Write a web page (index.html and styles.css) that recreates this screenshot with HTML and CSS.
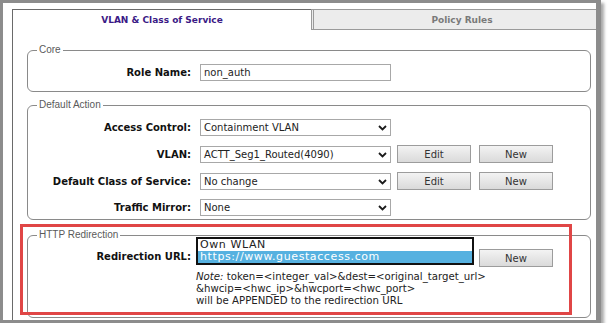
FILE: index.html
```html
<!DOCTYPE html>
<html lang="en">
<head>
    <meta charset="UTF-8">
    <meta name="viewport" content="width=device-width, initial-scale=1.0">
    <title>Role - VLAN &amp; Class of Service</title>
    <link rel="stylesheet" href="styles.css">
</head>
<body>
    <div class="frame">
        <!-- Tabs -->
        <div class="tabs">
            <div class="tab active">VLAN &amp; Class of Service</div>
            <div class="tab inactive">Policy Rules</div>
        </div>

        <div class="panel">
            <!-- Core -->
            <fieldset class="group core">
                <legend>Core</legend>
                <div class="row">
                    <label>Role Name:</label>
                    <div class="field">non_auth</div>
                </div>
            </fieldset>

            <!-- Default Action -->
            <fieldset class="group action">
                <legend>Default Action</legend>
                <div class="rows">
                    <div class="row">
                        <label>Access Control:</label>
                        <div class="field select">Containment VLAN
                            <svg class="chev" width="9" height="6" viewBox="0 0 9 6"><path d="M1 1 L4.5 4.5 L8 1" fill="none" stroke="#1a1a1a" stroke-width="1.8"/></svg>
                        </div>
                    </div>
                    <div class="row">
                        <label>VLAN:</label>
                        <div class="field select">ACTT_Seg1_Routed(4090)
                            <svg class="chev" width="9" height="6" viewBox="0 0 9 6"><path d="M1 1 L4.5 4.5 L8 1" fill="none" stroke="#1a1a1a" stroke-width="1.8"/></svg>
                        </div>
                        <button class="btn">Edit</button>
                        <button class="btn new">New</button>
                    </div>
                    <div class="row">
                        <label>Default Class of Service:</label>
                        <div class="field select">No change
                            <svg class="chev" width="9" height="6" viewBox="0 0 9 6"><path d="M1 1 L4.5 4.5 L8 1" fill="none" stroke="#1a1a1a" stroke-width="1.8"/></svg>
                        </div>
                        <button class="btn">Edit</button>
                        <button class="btn new">New</button>
                    </div>
                    <div class="row">
                        <label>Traffic Mirror:</label>
                        <div class="field select">None
                            <svg class="chev" width="9" height="6" viewBox="0 0 9 6"><path d="M1 1 L4.5 4.5 L8 1" fill="none" stroke="#1a1a1a" stroke-width="1.8"/></svg>
                        </div>
                    </div>
                </div>
            </fieldset>

            <!-- HTTP Redirection -->
            <fieldset class="group redirect">
                <legend>HTTP Redirection</legend>
                <div class="row top">
                    <label class="low">Redirection URL:</label>
                    <div class="listbox">
                        <div class="option">Own WLAN</div>
                        <div class="option selected">https://www.guestaccess.com</div>
                    </div>
                    <button class="btn list-new">New</button>
                </div>
                <div class="note">
                    <em>Note:</em> token=&lt;integer_val&gt;&amp;dest=&lt;original_target_url&gt;<br>
                    &amp;hwcip=&lt;hwc_ip&gt;&amp;hwcport=&lt;hwc_port&gt;<br>
                    will be APPENDED to the redirection URL
                </div>
            </fieldset>
        </div>

        <!-- Marca roja sobre la sección -->
        <div class="highlight"></div>
    </div>
</body>
</html>
```

FILE: styles.css
```css
* {
    margin: 0;
    padding: 0;
    box-sizing: border-box;
}

body {
    background: #fff;
    font-family: "DejaVu Sans", Verdana, sans-serif;
    font-size: 10px;
    color: #1e1e1e;
}

.frame {
    position: relative;
    display: flex;
    flex-direction: column;
    width: 601px;
    height: 323px;
    padding: 6px 0 0 9px;
    background: #fff;
    border: 3px solid #8c8c8c;
    border-right-width: 5px;
    box-shadow: 3px 3px 3px #a8a8a8;
}

.tabs {
    display: flex;
    height: 21px;
}

.tab {
    display: flex;
    align-items: center;
    justify-content: center;
    font-size: 9px;
    font-weight: bold;
}

.tab.active {
    width: 299px;
    color: #3b1a86;
    border-top: 1px solid #6a6a6a;
    border-left: 1px solid #6a6a6a;
}

.tab.inactive {
    flex: 1;
    padding-left: 14px;
    color: #7a7a7a;
    background: #ececec;
    border-top: 1px solid #9a9a9a;
    border-bottom: 1px solid #9a9a9a;
    border-left: 3px double #9a9a9a;
}

.panel {
    flex: 1;
    padding: 15px 5px 0 14px;
    border-left: 1px solid #6a6a6a;
}

.group {
    min-width: 0;
    padding: 9px 0 10px 9px;
    border: 1px solid #8a8a8a;
    border-radius: 6px;
}

.group legend {
    padding: 0 2px;
    font-family: "Liberation Sans", Arial, sans-serif;
    font-size: 10px;
    line-height: 10px;
    color: #5a5a5a;
}

.group.action {
    margin-top: 8px;
    padding-bottom: 3px;
}

.group.redirect {
    margin-top: 10px;
    padding-top: 0;
}

.rows {
    display: flex;
    flex-direction: column;
    gap: 9px;
}

.row {
    display: flex;
    align-items: center;
}

.row.top {
    align-items: flex-start;
    margin-top: -3px;
}

.row label {
    width: 154px;
    margin-right: 9px;
    text-align: right;
    font-weight: bold;
    color: #111;
}

.row label.low {
    padding-top: 14px;
    line-height: 12px;
}

.field {
    position: relative;
    width: 191px;
    height: 17px;
    padding-left: 3px;
    line-height: 15px;
    border: 1px solid #a8a8a8;
    color: #222;
}

.chev {
    position: absolute;
    right: 3px;
    top: 5px;
}

.btn {
    width: 74px;
    height: 18px;
    margin-left: 6px;
    font-family: "DejaVu Sans", Verdana, sans-serif;
    font-size: 10px;
    color: #333;
    background: linear-gradient(#f3f3f3, #dadada);
    border: 1px solid #9c9c9c;
}

.btn.new {
    margin-left: 8px;
}

.listbox {
    width: 278px;
    height: 28px;
    margin-left: -4px;
    border: 2px solid #111;
    font-size: 11px;
    line-height: 12px;
    letter-spacing: 0.6px;
    color: #222;
}

.option {
    padding-left: 2px;
}

.option.selected {
    background: #56b1e0;
    color: #fff;
}

.btn.list-new {
    margin-left: 5px;
    margin-top: 12px;
}

.note {
    margin: 4px 0 0 159px;
    font-size: 10.2px;
    line-height: 12px;
    color: #222;
}

.highlight {
    position: absolute;
    left: 17px;
    top: 221px;
    width: 552px;
    height: 91px;
    border: 3px solid #e04646;
}
```
